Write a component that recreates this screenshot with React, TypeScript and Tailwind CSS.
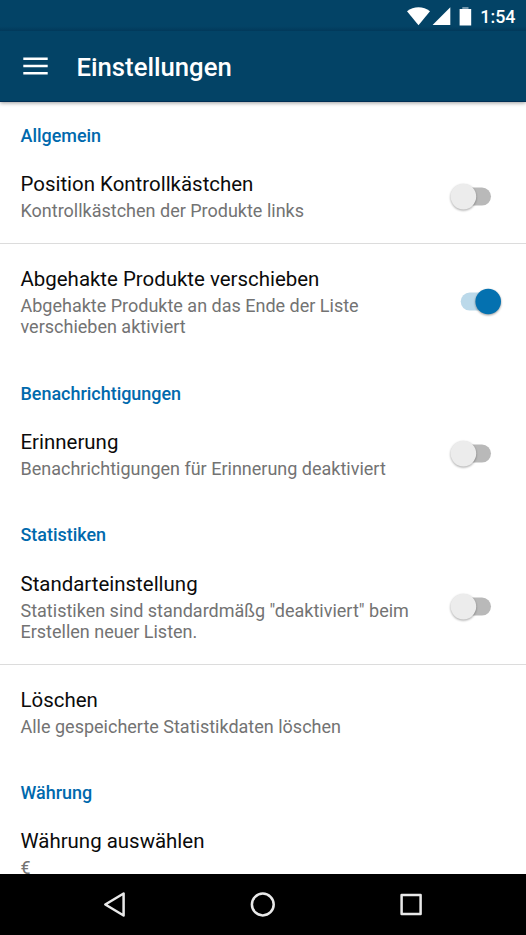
import React from "react";

function Toggle({ on = false }: { on?: boolean }) {
  return (
    <svg viewBox="0 0 60 36" className="h-9 w-[60px] shrink-0 overflow-visible" role="switch" aria-checked={on}>
      {on ? (
        <>
          <rect x="15.7" y="8.6" width="38" height="18" rx="9" fill="#bbd9ea" />
          <circle cx="43.2" cy="17.5" r="12.8" fill="#0471b0" className="drop-shadow-[0_1.5px_1.2px_rgba(0,0,0,0.4)]" />
        </>
      ) : (
        <>
          <rect x="8" y="8.6" width="38" height="18" rx="9" fill="#b9b9b9" />
          <circle cx="18.4" cy="17.6" r="12.8" fill="#ececec" className="drop-shadow-[0_1.2px_0.8px_rgba(0,0,0,0.35)]" />
        </>
      )}
    </svg>
  );
}

function SectionTitle({ children }: { children: React.ReactNode }) {
  return (
    <h2 className="h-[47.8px] pl-[20.5px] pt-[23.5px] text-[17.95px] leading-[21px] font-medium text-[#0069ad]">
      {children}
    </h2>
  );
}

type SettingProps = {
  title: string;
  lines: string[];
  toggle?: "on" | "off";
  divider?: boolean;
};

function Setting({ title, lines, toggle, divider }: SettingProps) {
  return (
    <div
      className={`flex items-center justify-between pt-[23px] pb-[22px] pl-[20.5px] pr-[21px] ${
        divider ? "border-b border-[#dcdcdc]" : ""
      }`}
    >
      <div className="flex flex-col gap-1 whitespace-nowrap">
        <div className="text-[20.44px] leading-6 text-[#0b0b0b]">{title}</div>
        <div className="text-[18px] leading-[21px] text-[#737373]">
          {lines.map((line) => (
            <div key={line}>{line}</div>
          ))}
        </div>
      </div>
      {toggle && <Toggle on={toggle === "on"} />}
    </div>
  );
}

export default function App() {
  return (
    <div className="flex h-[935px] w-[526px] flex-col overflow-hidden bg-white font-['Roboto',sans-serif]">
      <header className="z-10 flex h-[102px] shrink-0 flex-col border-b border-[#012f55] bg-[#034366] text-white shadow-[0_1px_4px_rgba(0,0,0,0.4)]">
        <div className="flex h-[31px] shrink-0 items-center justify-end bg-linear-to-b from-[#034366] from-85% to-[#02395a] pr-[10.5px]">
          <svg viewBox="0 0 70 30" className="h-[30px] w-[70px]" fill="#fff">
            <path d="M0 10.2 C6.5 4.9 16.5 4.9 23 10.2 L11.5 24.2 Z" />
            <path d="M43.3 6.3 V24 H25.6 Z" />
            <path d="M52.6 8 H64.2 V24.5 H52.6 Z" />
            <path d="M55.3 6 H61.5 V8 H55.3 Z" fillOpacity=".45" />
          </svg>
          <span className="ml-[3.5px] pt-[2px] text-[17.9px] leading-[21px] font-medium">1:54</span>
        </div>
        <div className="flex flex-1 items-center pl-[23px]">
          <svg viewBox="0 0 25 18" className="h-[18px] w-[25px]" fill="#fff">
            <path d="M.3 .5H24.7V3H.3ZM.3 7.8H24.7V10.3H.3ZM.3 15H24.7V17.5H.3Z" />
          </svg>
          <h1 className="ml-[28.5px] pt-[2px] text-[25.7px] leading-[30px] font-medium">Einstellungen</h1>
        </div>
      </header>

      <main className="-mt-[0.8px] min-h-0 flex-1 overflow-hidden">
        <SectionTitle>Allgemein</SectionTitle>
        <Setting title="Position Kontrollkästchen" lines={["Kontrollkästchen der Produkte links"]} toggle="off" divider />
        <Setting
          title="Abgehakte Produkte verschieben"
          lines={["Abgehakte Produkte an das Ende der Liste", "verschieben aktiviert"]}
          toggle="on"
        />
        <SectionTitle>Benachrichtigungen</SectionTitle>
        <Setting title="Erinnerung" lines={["Benachrichtigungen für Erinnerung deaktiviert"]} toggle="off" />
        <SectionTitle>Statistiken</SectionTitle>
        <Setting
          title="Standarteinstellung"
          lines={['Statistiken sind standardmäßg "deaktiviert" beim', "Erstellen neuer Listen."]}
          toggle="off"
          divider
        />
        <Setting title="Löschen" lines={["Alle gespeicherte Statistikdaten löschen"]} />
        <SectionTitle>Währung</SectionTitle>
        <Setting title="Währung auswählen" lines={["€"]} />
      </main>

      <nav className="flex h-[61px] shrink-0 items-center bg-black">
        <svg viewBox="0 0 526 61" className="h-[61px] w-[526px]" fill="none" stroke="#e9e9e9" strokeWidth="2.5" strokeLinejoin="round">
          <path d="M123.6 19.5 V41.5 L105.3 30.5 Z" />
          <circle cx="262.8" cy="30.5" r="10.9" />
          <rect x="401.6" y="21" width="19" height="19" />
        </svg>
      </nav>
    </div>
  );
}
